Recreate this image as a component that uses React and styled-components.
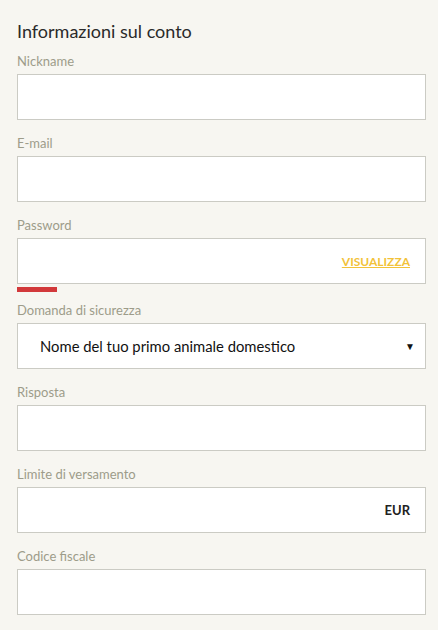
import React from "react"
import styled, { createGlobalStyle } from "styled-components"

const Global = createGlobalStyle`
  body {
    margin: 0;
    background: #f7f6f1;
    font-family: Lato, "Open Sans", sans-serif;
  }
`

const Page = styled.div`
  padding: 19px 12px 20px 17px;
`

const Title = styled.h2`
  margin: 0 0 10px;
  font-size: 18px;
  font-weight: 400;
  line-height: 24px;
  color: #2a2a2a;
`

const Field = styled.div`
  margin-bottom: ${props => props.tight ? "10px" : "15px"};
`

const Label = styled.label`
  display: block;
  font-size: 13px;
  line-height: 16px;
  color: #9d9c8a;
  margin-bottom: 5px;
`

const Box = styled.div`
  display: flex;
  align-items: center;
  height: 46px;
  box-sizing: border-box;
  background: #fff;
  border: 1px solid #cbcbc4;
`

const Input = styled.input`
  flex: 1;
  height: 100%;
  border: 0;
  outline: none;
  background: transparent;
  padding: 0 15px;
  font-family: inherit;
  font-size: 15px;
`

const Suffix = styled.span`
  padding-right: 15px;
  font-size: ${props => props.small ? "12px" : "13px"};
  font-weight: 700;
  color: ${props => props.accent ? "#f2c23a" : "#222"};
  text-decoration: ${props => props.accent ? "underline" : "none"};
`

const SelectText = styled.div`
  flex: 1;
  padding-left: 22px;
  font-size: 14.8px;
  color: #111;
`

const Arrow = styled.span`
  padding-right: 10px;
  font-size: 10px;
  color: #111;
`

const Strength = styled.div`
  width: 40px;
  height: 5px;
  margin-top: 3px;
  background: #d2393b;
`

export default function App() {
  return (
    <Page>
      <Global />
      <Title>Informazioni sul conto</Title>
      <Field>
        <Label>Nickname</Label>
        <Box><Input /></Box>
      </Field>
      <Field>
        <Label>E-mail</Label>
        <Box><Input /></Box>
      </Field>
      <Field tight>
        <Label>Password</Label>
        <Box>
          <Input type="password" />
          <Suffix accent small>VISUALIZZA</Suffix>
        </Box>
        <Strength />
      </Field>
      <Field>
        <Label>Domanda di sicurezza</Label>
        <Box>
          <SelectText>Nome del tuo primo animale domestico</SelectText>
          <Arrow>▼</Arrow>
        </Box>
      </Field>
      <Field>
        <Label>Risposta</Label>
        <Box><Input /></Box>
      </Field>
      <Field>
        <Label>Limite di versamento</Label>
        <Box>
          <Input />
          <Suffix>EUR</Suffix>
        </Box>
      </Field>
      <Field>
        <Label>Codice fiscale</Label>
        <Box><Input /></Box>
      </Field>
    </Page>
  )
}
